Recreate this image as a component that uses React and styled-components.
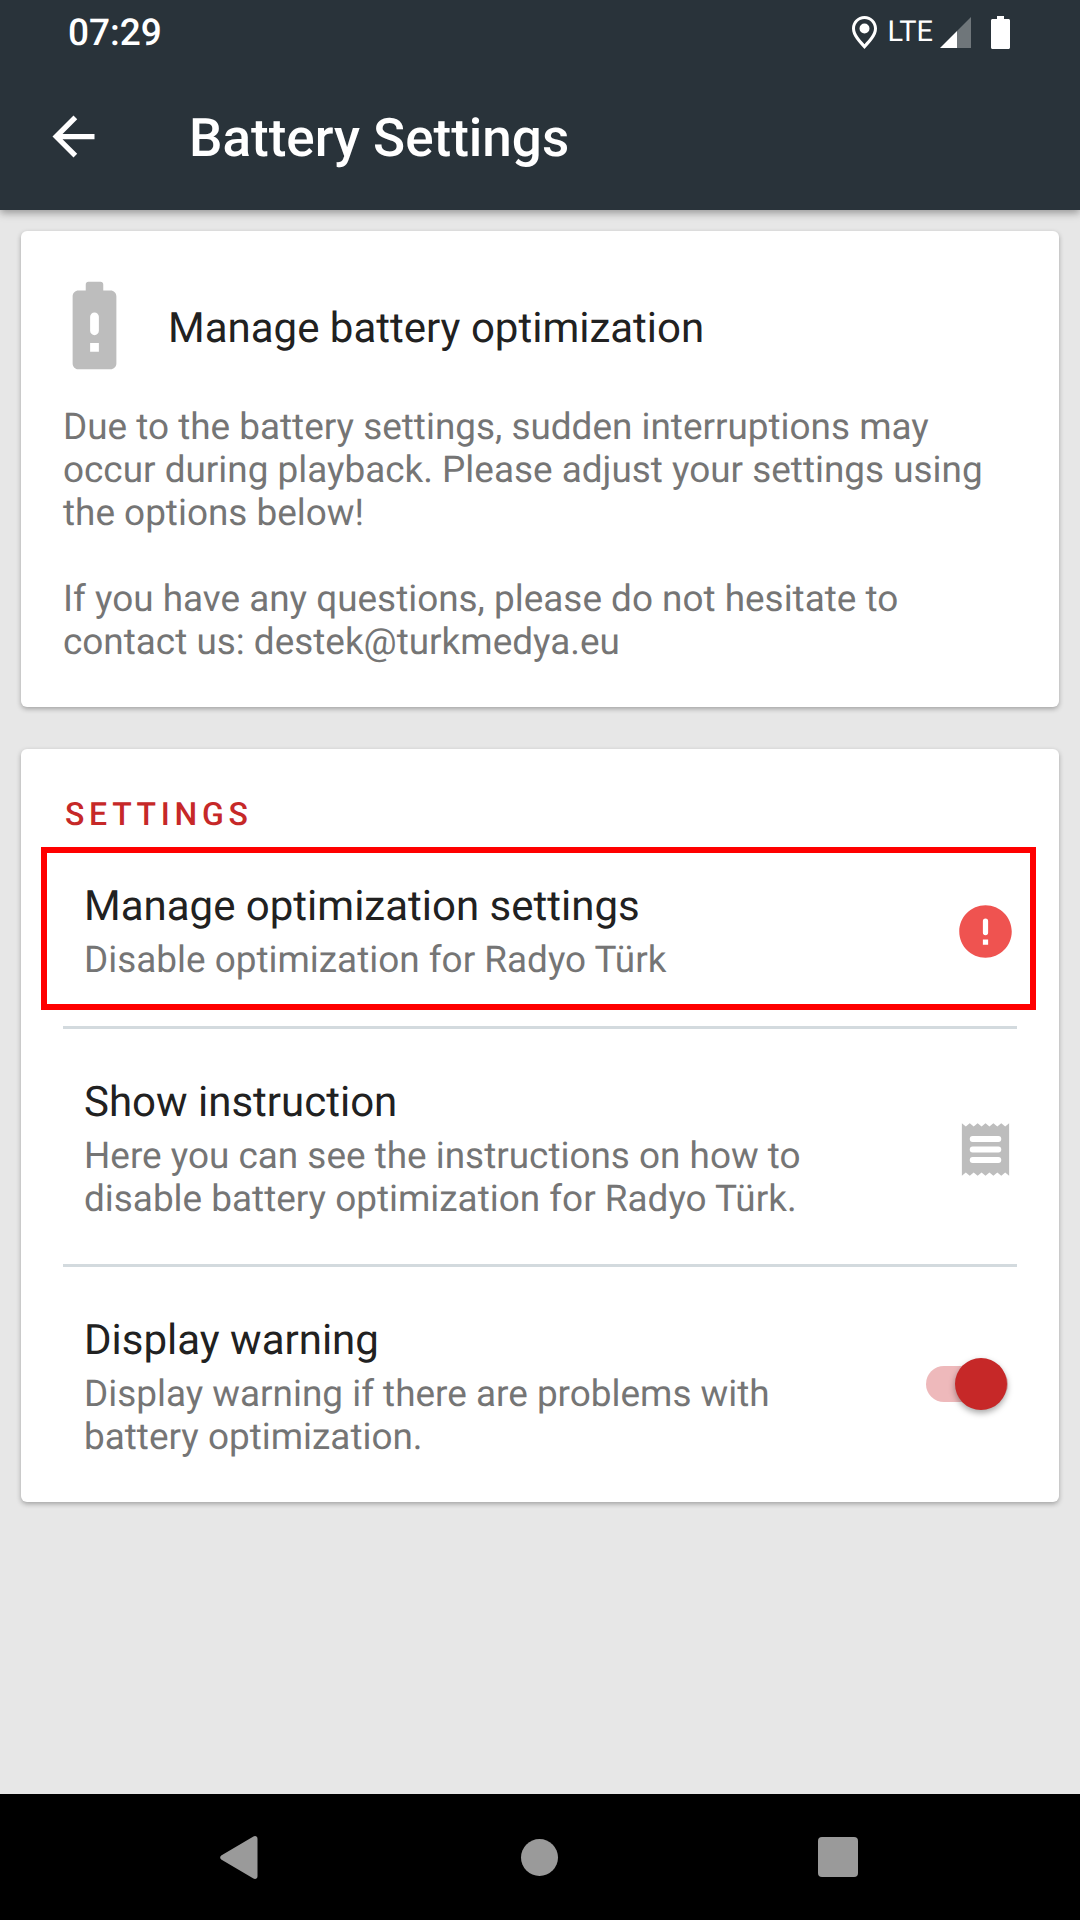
import React from "react";
import styled, { createGlobalStyle } from "styled-components";

const GlobalStyle = createGlobalStyle`
  html, body {
    margin: 0;
    padding: 0;
    background: #e7e7e7;
  }
  * {
    box-sizing: border-box;
  }
`;

const Screen = styled.div`
  width: 1080px;
  height: 1920px;
  display: flex;
  flex-direction: column;
  overflow: hidden;
  background: #e7e7e7;
  font-family: Roboto, "Noto Sans", sans-serif;
  text-rendering: geometricPrecision;
`;

const Header = styled.header`
  position: relative;
  z-index: 2;
  height: 210px;
  flex: none;
  background: #29333a;
  box-shadow: 0 3px 8px rgba(0, 0, 0, 0.35);
  color: #fff;
`;

const StatusBar = styled.div`
  height: 63px;
  display: flex;
  align-items: center;
  padding: 3px 70px 0 68px;
`;

const Time = styled.div`
  font-size: 37px;
  font-weight: 500;
  flex: 1;
`;

const StatusIcons = styled.div`
  display: flex;
  align-items: center;
  margin-top: -2px;
`;

const Lte = styled.span`
  font-size: 29px;
  margin: 0 7px 0 10px;
  line-height: 34px;
`;

const Toolbar = styled.div`
  display: flex;
  align-items: center;
  height: 147px;
  padding-left: 42px;
`;

const Title = styled.h1`
  margin: 0 0 0 84px;
  padding-top: 2px;
  font-size: 53px;
  font-weight: 500;
`;

const Content = styled.main`
  flex: 1;
  padding: 21px;
  display: flex;
  flex-direction: column;
  gap: 42px;
`;

const Card = styled.section`
  background: #fff;
  border-radius: 6px;
  box-shadow: 0 2px 5px rgba(0, 0, 0, 0.3);
`;

const InfoCard = styled(Card)`
  height: 476px;
  padding: 42px 42px 0;
`;

const InfoHead = styled.div`
  display: flex;
  align-items: center;
  margin-left: -21px;
  gap: 21px;
  height: 105px;
`;

const InfoTitle = styled.div`
  font-size: 42px;
  color: #212121;
  padding-top: 5px;
`;

const InfoText = styled.p`
  margin: 28px 0 0;
  font-size: 36.9px;
  line-height: 43px;
  color: #757575;
  white-space: nowrap;
`;

const SettingsCard = styled(Card)`
  height: 753px;
  padding-top: 45px;
`;

const SectionLabel = styled.div`
  margin-left: 44px;
  height: 53px;
  line-height: 40px;
  font-size: 32px;
  font-weight: 500;
  letter-spacing: 4.7px;
  color: #c62828;
`;

const Row = styled.div`
  display: flex;
  align-items: center;
  justify-content: space-between;
  margin: 0 42px;
  padding: ${(p) => p.$pad};
  border-bottom: ${(p) => (p.$last ? "none" : "3px solid #d3dade")};
`;

const HighlightRow = styled.div`
  display: flex;
  align-items: center;
  justify-content: space-between;
  height: 163px;
  margin: 0 23px 0 20px;
  padding: 6px 13px 0 37px;
  border: 6px solid #ff0000;
`;

const RowSpacer = styled.div`
  height: 19px;
  margin: 0 42px;
  border-bottom: 3px solid #d3dade;
`;

const RowTitle = styled.div`
  padding-top: 1px;
  font-size: 42px;
  line-height: 50px;
  color: #212121;
`;

const RowSub = styled.div`
  margin-top: 7px;
  font-size: 36.9px;
  line-height: 43px;
  color: #757575;
  white-space: nowrap;
`;

const Switch = styled.div`
  position: relative;
  width: 82px;
  height: 36px;
  margin: 0 9px 7px 0;
  border-radius: 18px;
  background: #eeb9bb;
`;

const Thumb = styled.div`
  position: absolute;
  top: -8px;
  left: 29px;
  width: 52px;
  height: 52px;
  border-radius: 50%;
  background: #c62828;
  box-shadow: 0 3px 6px rgba(0, 0, 0, 0.35);
`;

const NavBar = styled.nav`
  height: 126px;
  flex: none;
  background: #000;
  position: relative;
  display: grid;
  grid-template-columns: 477px 300px 1fr;
  align-items: center;
  justify-items: start;
`;

const NavSlot = styled.div`
  display: flex;
  padding-left: ${(p) => p.$left}px;
`;

const Icon = styled.svg`
  display: block;
  flex: none;
  fill: ${(p) => p.$color || "#fff"};
`;

const BatteryGlyph = styled(Icon)`
  margin-left: 20px;
`;

const RoundSquare = styled.div`
  width: 40px;
  height: 40px;
  border-radius: 4px;
  background: #9a9a9a;
`;

const RoundDot = styled.div`
  width: 37px;
  height: 37px;
  border-radius: 50%;
  background: #9a9a9a;
`;

function LocationIcon() {
  return (
    <Icon width="25" height="33" viewBox="0 0 25 33">
      <path
        fillRule="evenodd"
        d="M12.5 0C5.6 0 0 5.6 0 12.5 0 20 6.5 26 12.5 33 18.5 26 25 20 25 12.5 25 5.6 19.4 0 12.5 0zm0 3C17.8 3 22 7.2 22 12.5c0 5.600-5 10.500-9.500 15.800C8 23 3 18.100 3 12.500 3 7.200 7.200 3 12.500 3zm0 4.500a5 5 0 1 0 0 10 5 5 0 0 0 0-10z"
      />
    </Icon>
  );
}

function SignalIcon() {
  return (
    <Icon width="31" height="31" viewBox="0 0 31 31">
      <path fill="#6f767a" d="M31 0v31H17V14z" />
      <path d="M17 14v17H0z" />
    </Icon>
  );
}

function BatteryIcon() {
  return (
    <BatteryGlyph width="19" height="33" viewBox="0 0 19 33">
      <path d="M6 0h7v3h4.500c.800 0 1.500.700 1.500 1.500V31.500c0 .800-.700 1.500-1.500 1.500h-16C.700 33 0 32.300 0 31.500V4.500C0 3.700.700 3 1.500 3H6z" />
    </BatteryGlyph>
  );
}

function BackArrow() {
  return (
    <Icon width="63" height="63" viewBox="0 0 24 24">
      <path d="M20 11H7.830l5.590-5.590L12 4l-8 8 8 8 1.410-1.410L7.830 13H20v-2z" />
    </Icon>
  );
}

function BatteryAlert() {
  return (
    <Icon width="105" height="105" viewBox="0 0 24 24" $color="#bdbdbd">
      <path
        fillRule="evenodd"
        d="M15.670 4H14V2.600C14 2.270 13.730 2 13.400 2h-2.800C10.270 2 10 2.270 10 2.600V4H8.330C7.600 4 7 4.600 7 5.330v15.330C7 21.400 7.600 22 8.330 22h7.330c.740 0 1.340-.600 1.340-1.330V5.330C17 4.600 16.400 4 15.670 4zM13 18h-2v-2h2v2zm0-4.800a1 1 0 0 1-2 0V10a1 1 0 0 1 2 0v3.200z"
      />
    </Icon>
  );
}

function ErrorIcon() {
  return (
    <Icon width="63" height="63" viewBox="0 0 24 24" $color="#ef5350">
      <path
        fillRule="evenodd"
        d="M12 2C6.480 2 2 6.480 2 12s4.480 10 10 10 10-4.480 10-10S17.520 2 12 2zm1 15h-2v-2h2v2zm0-4.600a1 1 0 0 1-2 0V8a1 1 0 0 1 2 0v4.400z"
      />
    </Icon>
  );
}

function ReceiptIcon() {
  return (
    <Icon width="63" height="63" viewBox="0 0 24 24" $color="#bdbdbd">
      <path d="M3 22l1.500-1.200L6 22l1.500-1.200L9 22l1.500-1.200L12 22l1.500-1.200L15 22l1.500-1.200L18 22l1.500-1.200L21 22V2l-1.500 1.200L18 2l-1.500 1.200L15 2l-1.500 1.200L12 2l-1.500 1.200L9 2 7.500 3.200 6 2 4.500 3.200 3 2v20z" />
      <rect x="6" y="6.900" width="12" height="2.200" rx="1.100" fill="#fff" />
      <rect x="6" y="10.900" width="12" height="2.200" rx="1.100" fill="#fff" />
      <rect x="6" y="14.900" width="12" height="2.200" rx="1.100" fill="#fff" />
    </Icon>
  );
}

function NavBack() {
  return (
    <Icon width="38" height="43" viewBox="0 0 38 43" $color="#9a9a9a">
      <path d="M33 .800c2-1.600 4.500-.600 4.500 2V40.200c0 2.600-2.500 3.600-4.500 2L1.200 23.500c-1.400-1-1.400-3 0-4z" />
    </Icon>
  );
}

export default function App() {
  return (
    <>
      <GlobalStyle />
      <Screen>
        <Header>
          <StatusBar>
            <Time>07:29</Time>
            <StatusIcons>
              <LocationIcon />
              <Lte>LTE</Lte>
              <SignalIcon />
              <BatteryIcon />
            </StatusIcons>
          </StatusBar>
          <Toolbar>
            <BackArrow />
            <Title>Battery Settings</Title>
          </Toolbar>
        </Header>
        <Content>
          <InfoCard>
            <InfoHead>
              <BatteryAlert />
              <InfoTitle>Manage battery optimization</InfoTitle>
            </InfoHead>
            <InfoText>
              Due to the battery settings, sudden interruptions may
              <br />
              occur during playback. Please adjust your settings using
              <br />
              the options below!
              <br />
              <br />
              If you have any questions, please do not hesitate to
              <br />
              contact us: destek@turkmedya.eu
            </InfoText>
          </InfoCard>
          <SettingsCard>
            <SectionLabel>SETTINGS</SectionLabel>
            <HighlightRow>
              <div>
                <RowTitle>Manage optimization settings</RowTitle>
                <RowSub>Disable optimization for Radyo Türk</RowSub>
              </div>
              <ErrorIcon />
            </HighlightRow>
            <RowSpacer />
            <Row $pad="48px 0 43px 21px">
              <div>
                <RowTitle>Show instruction</RowTitle>
                <RowSub>
                  Here you can see the instructions on how to
                  <br />
                  disable battery optimization for Radyo Türk.
                </RowSub>
              </div>
              <ReceiptIcon />
            </Row>
            <Row $last $pad="48px 0 44px 21px">
              <div>
                <RowTitle>Display warning</RowTitle>
                <RowSub>
                  Display warning if there are problems with
                  <br />
                  battery optimization.
                </RowSub>
              </div>
              <Switch>
                <Thumb />
              </Switch>
            </Row>
          </SettingsCard>
        </Content>
        <NavBar>
          <NavSlot $left={220}>
            <NavBack />
          </NavSlot>
          <NavSlot $left={44}>
            <RoundDot />
          </NavSlot>
          <NavSlot $left={41}>
            <RoundSquare />
          </NavSlot>
        </NavBar>
      </Screen>
    </>
  );
}
